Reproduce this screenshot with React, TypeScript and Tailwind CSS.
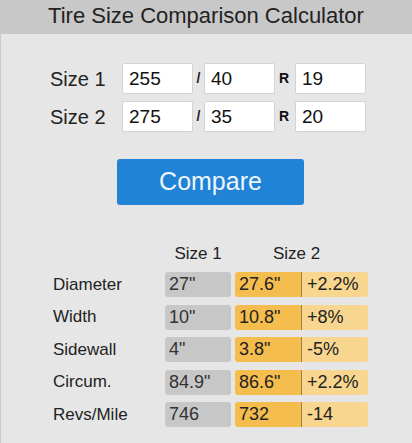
import React from 'react';

interface ResultRow {
  label: string;
  size1: string;
  size2: string;
  diff: string;
}

const rows: ResultRow[] = [
  { label: 'Diameter', size1: '27"', size2: '27.6"', diff: '+2.2%' },
  { label: 'Width', size1: '10"', size2: '10.8"', diff: '+8%' },
  { label: 'Sidewall', size1: '4"', size2: '3.8"', diff: '-5%' },
  { label: 'Circum.', size1: '84.9"', size2: '86.6"', diff: '+2.2%' },
  { label: 'Revs/Mile', size1: '746', size2: '732', diff: '-14' },
];

const font = { fontFamily: '"Liberation Sans", Arial, sans-serif' };

function SizeInput({ value }: { value: string }) {
  return (
    <input
      defaultValue={value}
      className="w-[71px] h-[31px] bg-white border border-[#d4d4d4] rounded-[2px] px-[6px] text-[19px] text-[#111] outline-none"
    />
  );
}

function SizeRow({ label, width, ratio, rim }: { label: string; width: string; ratio: string; rim: string }) {
  return (
    <div className="flex items-center">
      <span className="w-[72px] text-[20px] text-[#222]">{label}</span>
      <SizeInput value={width} />
      <span className="w-[11px] text-center text-[14px] font-bold text-[#222]">/</span>
      <SizeInput value={ratio} />
      <span className="w-[20px] pl-[4px] text-[14px] font-bold text-[#111]">R</span>
      <SizeInput value={rim} />
    </div>
  );
}

export default function App() {
  return (
    <div className="w-[412px] h-[443px] overflow-hidden bg-[#e6e6e6] flex flex-col" style={font}>
      <div className="h-[34px] shrink-0 bg-[#c8c8c8] text-center text-[22px] leading-[31px] text-[#222]">
        Tire Size Comparison Calculator
      </div>

      <div className="flex-1 border-l border-[#c9c9c9] pl-[49px]">
        <div className="mt-[29px] flex flex-col gap-[7px]">
          <SizeRow label="Size 1" width="255" ratio="40" rim="19" />
          <SizeRow label="Size 2" width="275" ratio="35" rim="20" />
        </div>

        <button className="ml-[67px] mt-[27px] w-[187px] h-[46px] rounded-[3px] bg-[#2183d6] text-[25px] text-[#eef6fd]">
          Compare
        </button>

        <div className="ml-[3px] mt-[39px]">
          <div className="flex h-[20px] leading-[20px] text-[17px] text-[#222] mb-[8px]">
            <span className="w-[112px]" />
            <span className="w-[66px] text-center">Size 1</span>
            <span className="pl-[42px]">Size 2</span>
          </div>

          <div className="flex flex-col gap-[7.5px]">
            {rows.map((row) => (
              <div key={row.label} className="flex items-center h-[25px] text-[18px] text-[#222]">
                <span className="w-[112px] text-[17px]">{row.label}</span>
                <span className="w-[66px] h-full leading-[25px] pl-[4px] rounded-[3px] bg-[#c7c7c7] text-[#333]">
                  {row.size1}
                </span>
                <span className="ml-[4px] w-[67px] h-full leading-[25px] pl-[4px] rounded-l-[3px] bg-[#f5bd4d] border-r border-[#9c8250]">
                  {row.size2}
                </span>
                <span className="w-[66px] h-full leading-[25px] pl-[5px] rounded-r-[3px] bg-[#f8d68f]">
                  {row.diff}
                </span>
              </div>
            ))}
          </div>
        </div>
      </div>
    </div>
  );
}
